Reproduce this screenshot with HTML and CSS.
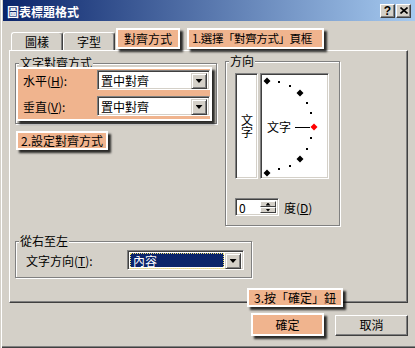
FILE: index.html
```html
<!DOCTYPE html>
<html lang="zh-Hant">
<head>
    <meta charset="UTF-8">
    <title>圖表標題格式</title>
    <link rel="stylesheet" href="styles.css">
</head>
<body>
    <div class="dialog">
        <div class="titlebar">
            <span class="title">圖表標題格式</span>
            <div class="tb-btns">
                <span class="tb-btn">?</span>
                <span class="tb-btn">
                    <svg width="8" height="7" viewBox="0 0 8 7"><path d="M0.5 0.5l7 6M7.5 0.5l-7 6" stroke="#000" stroke-width="1.6"/></svg>
                </span>
            </div>
        </div>

        <div class="tabs">
            <div class="tab">圖樣</div>
            <div class="tab">字型</div>
            <div class="note tab-on">對齊方式</div>
            <div class="note note-1">1.選擇「對齊方式」頁框</div>
        </div>

        <div class="panel">
            <div class="top-row">
                <div class="col-left">
                    <div class="group g-align">
                        <span class="group-title">文字對齊方式</span>
                        <div class="note align-box">
                            <div class="field">
                                <label class="field-label">水平(<u>H</u>):</label>
                                <div class="combo"><span class="combo-val">置中對齊</span><span class="drop"></span></div>
                            </div>
                            <div class="field">
                                <label class="field-label">垂直(<u>V</u>):</label>
                                <div class="combo"><span class="combo-val">置中對齊</span><span class="drop"></span></div>
                            </div>
                        </div>
                    </div>
                    <div class="note note-2">2.設定對齊方式</div>
                </div>

                <div class="group g-dir">
                    <span class="group-title">方向</span>
                    <div class="dir-boxes">
                        <div class="sunken vtext"><span class="vtext-label">文字</span></div>
                        <div class="sunken dial">
                            <svg width="65" height="102" viewBox="0 0 65 102">
                                <path d="M5 2.5l3.5 3.5-3.5 3.5-3.5-3.5zM38 14.5l3.5 3.5-3.5 3.5-3.5-3.5zM38 80.5l3.5 3.5-3.5 3.5-3.5-3.5zM5 94.5l3.5 3.5-3.5 3.5-3.5-3.5z" fill="#000"/>
                                <path d="M16 6h2v2h-2zM27 10h2v2h-2zM44 27h2v2h-2zM48 37h2v2h-2zM48 62h2v2h-2zM44 73h2v2h-2zM27 90h2v2h-2zM16 93h2v2h-2z" fill="#000"/>
                                <text x="5" y="57" font-size="12" font-family="Noto Sans CJK TC, sans-serif">文字</text>
                                <path d="M33 52.5h15" stroke="#000"/>
                                <path d="M52 48.5l3.5 3.5-3.5 3.5-3.5-3.5z" fill="#f00"/>
                            </svg>
                        </div>
                    </div>
                    <div class="spin-row">
                        <div class="sunken spin">
                            <span class="spin-val">0</span>
                            <div class="spin-btns">
                                <span class="spin-btn up"></span>
                                <span class="spin-btn down"></span>
                            </div>
                        </div>
                        <span>度(<u>D</u>)</span>
                    </div>
                </div>
            </div>

            <div class="group g-rtl">
                <span class="group-title">從右至左</span>
                <div class="field rtl-field">
                    <label class="field-label rtl-label">文字方向(<u>T</u>):</label>
                    <div class="combo rtl-combo"><span class="combo-val selected"><span class="focus">內容</span></span><span class="drop"></span></div>
                </div>
            </div>

            <div class="note note-3">3.按「確定」鈕</div>
        </div>

        <div class="buttons">
            <div class="note btn-ok">確定</div>
            <div class="btn">取消</div>
        </div>
    </div>
</body>
</html>
```

FILE: styles.css
```css
* {
    box-sizing: border-box;
}
body {
    margin: 0;
    font-family: "Noto Sans CJK TC", "Noto Sans CJK SC", sans-serif;
    font-size: 12px;
    color: #000;
}
u {
    text-decoration-thickness: 1px;
}

.dialog {
    width: 415px;
    height: 348px;
    padding-left: 3px;
    background: #d4d0c8;
    box-shadow: inset 1px 0 #d4d0c8, inset 2px 0 #fff, inset 0 -1px #404040, inset 0 -2px #808080;
}

/* title bar */
.titlebar {
    height: 21px;
    display: flex;
    align-items: center;
    justify-content: space-between;
    padding: 0 4px 0 4px;
    background: linear-gradient(to right, #0a246a, #a6caf0);
}
.title {
    color: #fff;
    font-weight: bold;
    line-height: 14px;
    padding-top: 2px;
}
.tb-btns {
    display: flex;
    gap: 1px;
}
.tb-btn {
    width: 15px;
    height: 14px;
    display: flex;
    align-items: center;
    justify-content: center;
    font-family: "Liberation Sans", sans-serif;
    font-weight: bold;
    font-size: 12px;
    background: #d4d0c8;
    border: 1px solid;
    border-color: #fff #404040 #404040 #fff;
    box-shadow: inset -1px -1px #808080;
}

/* callouts */
.note {
    position: relative;
    z-index: 2;
    white-space: nowrap;
    background: #f0b48e;
    border: 2px solid #fff;
    box-shadow: 3px 3px 2px rgba(0, 0, 0, 0.8);
}

/* tabs */
.tabs {
    display: flex;
    align-items: flex-end;
    height: 22px;
    margin: 7px 0 0 8px;
}
.tab {
    width: 52px;
    height: 18px;
    text-align: center;
    line-height: 17px;
    border: 1px solid;
    border-bottom: 0;
    border-color: #fff #404040 transparent #fff;
    border-radius: 3px 3px 0 0;
    box-shadow: inset -1px 0 #808080;
}
.tab-on {
    align-self: flex-start;
    width: 64px;
    height: 21px;
    margin-left: 1px;
    text-align: center;
    line-height: 17px;
}
.note-1 {
    align-self: flex-start;
    width: 137px;
    height: 21px;
    margin-left: 7px;
    padding-left: 3px;
    font-size: 11.5px;
    letter-spacing: -0.4px;
    line-height: 17px;
    overflow: hidden;
}

/* page panel */
.panel {
    position: relative;
    width: 399px;
    height: 253px;
    margin-left: 6px;
    padding-left: 5px;
    border: 1px solid;
    border-color: #fff #404040 #404040 #fff;
    box-shadow: inset -1px -1px #808080;
}
.top-row {
    display: flex;
    align-items: flex-start;
    gap: 8px;
}
.col-left {
    width: 202px;
    margin-top: 12px;
}

.group {
    border: 1px solid #808080;
    box-shadow: inset 1px 1px #fff, 1px 1px #fff;
}
.group-title {
    display: block;
    width: fit-content;
    height: 14px;
    line-height: 14px;
    margin: -8px 0 0 3px;
    padding: 0 1px;
    background: #d4d0c8;
}

.g-align {
    height: 61px;
}
.align-box {
    width: 196px;
    height: 54px;
    margin-top: -3px;
    padding: 1px 0 0 5px;
    display: flex;
    flex-direction: column;
    gap: 6px;
}
.field {
    display: flex;
    align-items: center;
}
.field-label {
    width: 74px;
}

.sunken {
    background: #fff;
    border: 1px solid;
    border-color: #808080 #fff #fff #808080;
    box-shadow: inset 1px 1px #404040, inset -1px -1px #d4d0c8;
}
.combo {
    width: 113px;
    height: 20px;
    display: flex;
    padding: 2px;
    background: #fff;
    border: 1px solid;
    border-color: #808080 #fff #fff #808080;
    box-shadow: inset 1px 1px #404040, inset -1px -1px #d4d0c8;
}
.combo-val {
    flex: 1;
    line-height: 16px;
    padding-left: 1px;
}
.drop {
    width: 16px;
    height: 16px;
    display: flex;
    align-items: center;
    justify-content: center;
    background: #d4d0c8;
    border: 1px solid;
    border-color: #d4d0c8 #404040 #404040 #d4d0c8;
    box-shadow: inset 1px 1px #fff, inset -1px -1px #808080;
}
.drop::after {
    content: "";
    width: 7px;
    height: 4px;
    background: #000;
    clip-path: polygon(0 0, 100% 0, 50% 100%);
}

.note-2 {
    width: 92px;
    height: 19px;
    margin: 7px 0 0 1px;
    padding-left: 3px;
    line-height: 15px;
}

/* direction */
.g-dir {
    width: 115px;
    height: 165px;
    margin-top: 10px;
}
.dir-boxes {
    display: flex;
    gap: 2px;
    margin: 5px 0 0 9px;
}
.vtext {
    width: 23px;
    height: 106px;
    display: flex;
    align-items: center;
    justify-content: center;
}
.vtext-label {
    writing-mode: vertical-rl;
    text-orientation: upright;
    line-height: 14px;
}
.dial {
    width: 69px;
    height: 106px;
    padding: 1px;
}
.dial svg {
    display: block;
}
.spin-row {
    display: flex;
    align-items: center;
    gap: 5px;
    margin: 19px 0 0 9px;
}
.spin {
    width: 44px;
    height: 18px;
    display: flex;
    padding: 2px;
}
.spin-val {
    flex: 1;
    line-height: 14px;
    padding-left: 1px;
}
.spin-btns {
    display: flex;
    flex-direction: column;
}
.spin-btn {
    width: 16px;
    height: 7px;
    display: flex;
    align-items: center;
    justify-content: center;
    background: #d4d0c8;
    border: 1px solid;
    border-color: #fff #404040 #404040 #fff;
}
.spin-btn::after {
    content: "";
    width: 5px;
    height: 3px;
    background: #000;
}
.up::after {
    clip-path: polygon(50% 0, 100% 100%, 0 100%);
}
.down::after {
    clip-path: polygon(0 0, 100% 0, 50% 100%);
}

/* right to left */
.g-rtl {
    width: 237px;
    height: 37px;
    margin-top: 15px;
}
.rtl-field {
    margin: 2px 0 0 10px;
}
.rtl-label {
    width: 101px;
}
.rtl-combo {
    width: 117px;
}
.selected {
    background: #0a246a;
    color: #fff;
    padding: 0;
    margin-right: 1px;
}
.focus {
    display: block;
    height: 16px;
    padding-left: 2px;
    border: 1px dotted #f0e070;
    line-height: 14px;
}

.note-3 {
    position: absolute;
    left: 237px;
    top: 237px;
    width: 96px;
    height: 19px;
    line-height: 15px;
    text-align: center;
}

/* buttons */
.buttons {
    display: flex;
    justify-content: flex-end;
    align-items: flex-start;
    gap: 11px;
    margin-top: 12px;
    padding-right: 7px;
}
.btn {
    width: 73px;
    height: 21px;
    text-align: center;
    line-height: 17px;
    border: 1px solid;
    border-color: #fff #404040 #404040 #fff;
    box-shadow: inset -1px -1px #808080;
}
.btn-ok {
    width: 73px;
    height: 23px;
    margin-top: -2px;
    text-align: center;
    line-height: 19px;
}
```
